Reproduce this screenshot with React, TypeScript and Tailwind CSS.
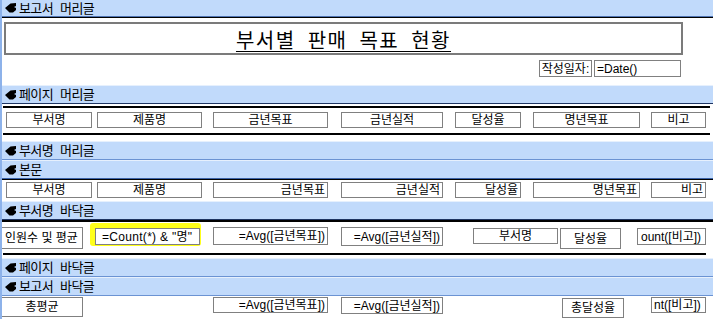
import React from "react";

function SectionIcon() {
  return (
    <svg width="11" height="10" viewBox="0 0 11 10" className="shrink-0">
      <path d="M0 5 L5.5 0.5 L11 0 L11 3 L9 4 L11 5 L11 7 L8 9.5 L4.5 9.5 Z" fill="#000" />
    </svg>
  );
}

function Bar({ label, className }: { label: string; className: string }) {
  return (
    <div className={`flex items-center bg-[#c1dafb] pl-[3px] text-[13px] leading-none text-black ${className}`}>
      <SectionIcon />
      <span className="ml-[3px] tracking-[-0.6px] [word-spacing:4px]">{label}</span>
    </div>
  );
}

function Box({ className, children }: { className: string; children: React.ReactNode }) {
  return (
    <div
      className={`flex shrink-0 items-center overflow-hidden whitespace-nowrap border border-[#808080] bg-white px-[2px] text-[12px] leading-none text-black ${className}`}
    >
      {children}
    </div>
  );
}

const headerCells = [
  { text: "부서명", cls: "ml-[4px] w-[86px]" },
  { text: "제품명", cls: "ml-[5px] w-[105px]" },
  { text: "금년목표", cls: "ml-[11px] w-[115px]" },
  { text: "금년실적", cls: "ml-[13px] w-[102px]" },
  { text: "달성율", cls: "ml-[12px] w-[66px]" },
  { text: "명년목표", cls: "ml-[12px] w-[107px]" },
  { text: "비고", cls: "ml-[11px] w-[55px]" },
];

const bodyAlign = [
  "justify-center",
  "justify-center",
  "justify-end",
  "justify-end",
  "justify-end",
  "justify-end",
  "justify-end",
];

export default function App() {
  return (
    <div className="h-[319px] w-[713px] overflow-hidden border-l-2 border-[#8db2ea] bg-white font-['Liberation_Sans','Noto_Sans_CJK_KR',sans-serif]">
      {/* 보고서 머리글 */}
      <Bar label="보고서 머리글" className="h-[17px] border-b border-[#4f74b3]" />
      <div className="flex h-[68px] flex-col border-t border-black">
        <div className="ml-[2px] mt-[4px] flex h-[33px] w-[679px] items-center justify-center border-2 border-[#7b7b7b] pt-[2px]">
          <span className="text-[20px] leading-none tracking-[1.5px] underline decoration-1 underline-offset-[3px] [word-spacing:6px] font-['Noto_Sans_CJK_KR',sans-serif]">
            부서별 판매 목표 현황
          </span>
        </div>
        <div className="mt-[5px] flex">
          <Box className="ml-[537px] h-[17px] w-[53px] justify-center px-[1px]">작성일자:</Box>
          <Box className="ml-[2px] h-[17px] w-[87px]">=Date()</Box>
        </div>
      </div>

      {/* 페이지 머리글 */}
      <Bar label="페이지 머리글" className="h-[19px] border-y border-t-[#e6f0fd] border-b-[#1e3563]" />
      <div className="flex h-[37px] flex-col">
        <div className="ml-[1px] mt-[2px] h-[2px] w-[707px] bg-black" />
        <div className="mt-[4px] flex">
          {headerCells.map((c) => (
            <Box key={c.text} className={`h-[16px] justify-center ${c.cls}`}>
              {c.text}
            </Box>
          ))}
        </div>
        <div className="ml-[1px] mt-[5px] h-[2px] w-[707px] bg-black" />
      </div>

      {/* 부서명 머리글 */}
      <Bar label="부서명 머리글" className="h-[19px] border-y border-t-[#e6f0fd] border-b-[#6b93d3]" />

      {/* 본문 */}
      <Bar label="본문" className="h-[19px] border-y border-t-[#e6f0fd] border-b-[#3b63a8]" />
      <div className="flex h-[22px] border-t border-black pt-[2px]">
        {headerCells.map((c, i) => (
          <Box key={c.text} className={`h-[16px] ${bodyAlign[i]} ${c.cls}`}>
            {c.text}
          </Box>
        ))}
      </div>

      {/* 부서명 바닥글 */}
      <Bar label="부서명 바닥글" className="h-[19px] border-y border-t-[#e6f0fd] border-b-[#1e3563]" />
      <div className="flex h-[38px] flex-col border-t-2 border-black">
        <div className="flex items-start">
          <Box className="mt-[5px] h-[22px] w-[81px] border-l-0 px-[3px]">인원수 및 평균</Box>
          <div className="ml-[7px] mt-[1px] rounded-[3px] bg-[#ffff1a] pb-[1px] pl-[5px] pr-[1px] pt-[5px]">
            <Box className="h-[17px] w-[105px] bg-[#ffff1a] pl-[6px] tracking-[0.3px]">=Count(*) &amp; "명"</Box>
          </div>
          <Box className="ml-[12px] mt-[5px] h-[18px] w-[115px] justify-end">=Avg([금년목표])</Box>
          <Box className="ml-[13px] mt-[5px] h-[19px] w-[102px] justify-end">=Avg([금년실적])</Box>
          <Box className="ml-[30px] mt-[6px] h-[16px] w-[85px] justify-center">부서명</Box>
          <Box className="ml-[2px] mt-[6px] h-[21px] w-[61px] justify-center">달성율</Box>
          <Box className="ml-[16px] mt-[6px] h-[17px] w-[69px] px-[3px]">ount([비고])</Box>
        </div>
        <div className="ml-[1px] mt-[4px] h-[2px] w-[703px] bg-black" />
      </div>

      {/* 페이지 바닥글 */}
      <Bar label="페이지 바닥글" className="h-[19px] border-y border-t-[#e6f0fd] border-b-[#6b93d3]" />

      {/* 보고서 바닥글 */}
      <Bar label="보고서 바닥글" className="h-[19px] border-y border-t-[#e6f0fd] border-b-[#6b93d3]" />
      <div className="flex h-[24px] items-start">
        <Box className="mt-[1px] h-[20px] w-[81px] justify-center border-l-0">총평균</Box>
        <Box className="ml-[130px] mt-[1px] h-[16px] w-[115px] justify-end">=Avg([금년목표])</Box>
        <Box className="ml-[13px] mt-[1px] h-[17px] w-[102px] justify-end">=Avg([금년실적])</Box>
        <Box className="ml-[119px] mt-[2px] h-[20px] w-[62px] justify-center">총달성율</Box>
        <Box className="ml-[27px] mt-[1px] h-[16px] w-[55px] px-[1px]">nt([비고])</Box>
      </div>
    </div>
  );
}
